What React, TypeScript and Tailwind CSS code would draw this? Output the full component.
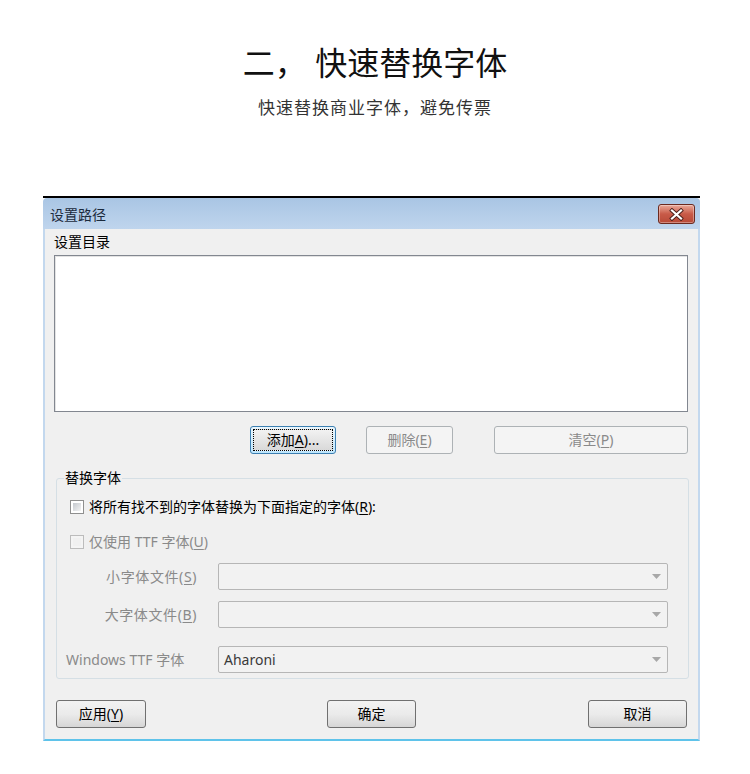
import type { ReactNode } from 'react';

const FONT = { fontFamily: '"Noto Sans", "Noto Sans CJK SC", sans-serif' };

function U({ children }: { children: ReactNode }) {
  return <span className="underline underline-offset-2">{children}</span>;
}

function Btn({
  children,
  className = '',
  disabled,
  focused,
}: {
  children: ReactNode;
  className?: string;
  disabled?: boolean;
  focused?: boolean;
}) {
  if (disabled) {
    return (
      <div
        className={`flex h-[28px] items-center justify-center rounded-[3px] border border-[#adb2b5] bg-[#f4f4f4] text-[14px] text-[#8a8a8a] ${className}`}
      >
        {children}
      </div>
    );
  }
  return (
    <div
      className={`flex h-[28px] items-center justify-center rounded-[3px] border p-[2px] text-[14px] text-black ${
        focused ? 'border-[#3c7fb1] bg-gradient-to-b from-[#eaf6fd] to-[#bee6fd]' : 'border-[#707070] bg-gradient-to-b from-[#f2f2f2] via-[#ebebeb] to-[#d6d6d6]'
      } ${className}`}
    >
      <div
        className={`flex h-full w-full items-center justify-center ${
          focused ? 'border border-dotted border-black bg-gradient-to-b from-[#f2f2f2] to-[#d9d9d9]' : ''
        }`}
      >
        {children}
      </div>
    </div>
  );
}

function CheckBox({ disabled }: { disabled?: boolean }) {
  return (
    <div
      className={`h-[14px] w-[14px] border p-[2px] ${disabled ? 'border-[#bcbcbc] bg-[#f4f4f4]' : 'border-[#8f8f8f] bg-white'}`}
    >
      <div className={`h-full w-full ${disabled ? 'bg-[#f0f0f0]' : 'bg-gradient-to-br from-[#c4c8ce] to-[#f4f4f4]'}`} />
    </div>
  );
}

function Combo({ value }: { value?: string }) {
  return (
    <div className="flex h-[27px] w-[450px] items-center rounded-[2px] border border-[#b6b6b6] bg-[#f2f2f2] pl-[5px] pr-[6px]">
      <span className="flex-1 text-[14px] text-[#3a3a3a]">{value}</span>
      <svg width="9" height="5" viewBox="0 0 9 5">
        <path d="M0 0h9L4.5 5z" fill="#a8a8a8" />
      </svg>
    </div>
  );
}

function CloseButton() {
  return (
    <div className="flex h-[20px] w-[37px] items-center justify-center rounded-[3px] border border-[#6b2a20] bg-gradient-to-b from-[#e9a99a] via-[#c85a48] to-[#b84a38] shadow-[inset_0_0_0_1px_rgba(255,255,255,0.35)]">
      <svg width="15" height="13" viewBox="0 0 15 13">
        <path d="M3 2.5l9 8M12 2.5l-9 8" stroke="#4a1f1a" strokeWidth="4" strokeLinecap="square" />
        <path d="M3 2.5l9 8M12 2.5l-9 8" stroke="#ffffff" strokeWidth="2.2" strokeLinecap="square" />
      </svg>
    </div>
  );
}

export default function App() {
  return (
    <div className="min-h-[774px] w-[750px] bg-white pb-[34px]" style={FONT}>
      <div className="flex flex-col items-center pt-[45px]">
        <h1 className="text-[32px] leading-[36px] font-normal text-[#111]">二， 快速替换字体</h1>
        <p className="mt-[15px] text-[17px] leading-[24px] tracking-[1px] text-[#333]">快速替换商业字体，避免传票</p>
      </div>

      <div className="ml-[43px] mt-[76px] w-[657px] border-t-2 border-black">
        {/* title bar */}
        <div className="flex h-[31px] items-start justify-between rounded-t-[4px] bg-gradient-to-b from-[#a9c5e4] to-[#bfd5ed] pl-[7px] pr-[5px]">
          <span className="mt-[7px] text-[14px] leading-[20px] text-[#1b2a3c]">设置路径</span>
          <div className="mt-[6px]">
            <CloseButton />
          </div>
        </div>

        {/* body */}
        <div className="border-x-2 border-b-2 border-x-[#c3d8ee] border-b-[#5fc3ea] bg-[#f0f0f0] pb-[11px] pl-[9px] pr-[10px] pt-[3px] text-[14px] leading-[20px]">
          <div className="text-black">设置目录</div>
          <div className="mt-[3px] h-[157px] border border-[#828790] bg-white shadow-[inset_1px_1px_0_#e3e3e3]" />

          <div className="mt-[14px] flex">
            <Btn focused className="ml-[196px] w-[86px]">
              添加<U>A</U>)...
            </Btn>
            <Btn disabled className="ml-[30px] w-[87px]">
              删除(<U>E</U>)
            </Btn>
            <Btn disabled className="ml-[41px] w-[194px]">
              清空(<U>P</U>)
            </Btn>
          </div>

          <fieldset className="ml-[2px] mt-[14px] rounded-[3px] border border-[#d5dfe5] pb-[5px] pl-[13px] pr-[20px]">
            <legend className="ml-[-6px] px-[1px] text-black">替换字体</legend>

            <div className="mt-[9px] flex h-[20px] items-center gap-[5px] text-black">
              <CheckBox />
              <span>
                将所有找不到的字体替换为下面指定的字体(<U>R</U>):
              </span>
            </div>

            <div className="mt-[15px] flex h-[20px] items-center gap-[5px] text-[#8a8a8a]">
              <CheckBox disabled />
              <span>
                仅使用 TTF 字体(<U>U</U>)
              </span>
            </div>

            <div className="ml-[-13px] mt-[11px] flex items-center">
              <div className="w-[140px] text-right tracking-[0.6px] text-[#8a8a8a]">
                小字体文件(<U>S</U>)
              </div>
              <div className="ml-[21px]">
                <Combo />
              </div>
            </div>

            <div className="ml-[-13px] mt-[11px] flex items-center">
              <div className="w-[140px] text-right tracking-[0.6px] text-[#8a8a8a]">
                大字体文件(<U>B</U>)
              </div>
              <div className="ml-[21px]">
                <Combo />
              </div>
            </div>

            <div className="ml-[-13px] mt-[18px] flex items-center">
              <div className="w-[140px] pl-[9px] text-[#8a8a8a]">Windows TTF 字体</div>
              <div className="ml-[21px]">
                <Combo value="Aharoni" />
              </div>
            </div>
          </fieldset>

          <div className="mt-[21px] flex">
            <Btn className="ml-[2px] w-[90px]">
              应用(<U>Y</U>)
            </Btn>
            <Btn className="ml-[181px] w-[89px]">确定</Btn>
            <Btn className="ml-auto mr-[1px] w-[99px]">取消</Btn>
          </div>
        </div>
      </div>
    </div>
  );
}
